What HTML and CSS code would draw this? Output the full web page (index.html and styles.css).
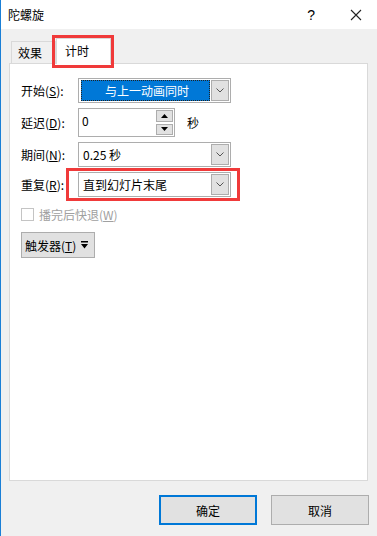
FILE: index.html
```html
<!DOCTYPE html>
<html lang="zh-CN">
<head>
    <meta charset="UTF-8">
    <title>陀螺旋</title>
    <link rel="stylesheet" href="styles.css">
</head>
<body>
    <div class="window">
        <div class="titlebar">
            <span class="title">陀螺旋</span>
            <span class="help">?</span>
            <svg class="close" width="12" height="12" viewBox="0 0 12 12">
                <path d="M1 1 L11 11 M11 1 L1 11" stroke="#222" stroke-width="1.1" fill="none"/>
            </svg>
        </div>

        <div class="tabs">
            <div class="tab">效果</div>
            <div class="tab active">计时<span class="mark"></span></div>
        </div>

        <div class="panel">
            <div class="row">
                <span class="label">开始(<u>S</u>):</span>
                <div class="combo">
                    <div class="combo-value selected">与上一动画同时</div>
                    <span class="drop"><svg width="8" height="5" viewBox="0 0 8 5"><path d="M0.5 0.5 L4 4 L7.5 0.5" stroke="#555" fill="none"/></svg></span>
                </div>
            </div>

            <div class="row">
                <span class="label">延迟(<u>D</u>):</span>
                <div class="spin">
                    <span class="spin-value">0</span>
                    <div class="spin-btns">
                        <span class="spin-btn"><svg width="7" height="4" viewBox="0 0 7 4"><path d="M0 4 L3.5 0 L7 4 Z" fill="#000"/></svg></span>
                        <span class="spin-btn"><svg width="7" height="4" viewBox="0 0 7 4"><path d="M0 0 L3.5 4 L7 0 Z" fill="#000"/></svg></span>
                    </div>
                </div>
                <span class="unit">秒</span>
            </div>

            <div class="row">
                <span class="label">期间(<u>N</u>):</span>
                <div class="combo">
                    <div class="combo-value">0.25 秒</div>
                    <span class="drop"><svg width="8" height="5" viewBox="0 0 8 5"><path d="M0.5 0.5 L4 4 L7.5 0.5" stroke="#555" fill="none"/></svg></span>
                </div>
            </div>

            <div class="row">
                <span class="label">重复(<u>R</u>):</span>
                <div class="combo marked">
                    <div class="combo-value">直到幻灯片末尾</div>
                    <span class="drop"><svg width="8" height="5" viewBox="0 0 8 5"><path d="M0.5 0.5 L4 4 L7.5 0.5" stroke="#555" fill="none"/></svg></span>
                    <span class="mark"></span>
                </div>
            </div>

            <div class="check-row">
                <span class="checkbox"></span>
                <span class="check-label">播完后快退(<u>W</u>)</span>
            </div>

            <button class="trigger">
                <span class="trigger-text">触发器(<u>T</u>)</span>
                <svg width="7" height="8" viewBox="0 0 7 8"><path d="M0 0 H7 V1.4 H0 Z M0 3 H7 L3.5 7.5 Z" fill="#000"/></svg>
            </button>
        </div>

        <div class="footer">
            <button class="btn default">确定</button>
            <button class="btn">取消</button>
        </div>
    </div>
</body>
</html>
```

FILE: styles.css
```css
body {
    margin: 0;
    background: #f0f0f0;
    font-family: "Noto Sans CJK SC", "Noto Sans", sans-serif;
    font-size: 12px;
    color: #000;
}
.window {
    width: 377px;
    height: 536px;
    box-sizing: border-box;
    border-left: 1px solid #1a7fd6;
    display: flex;
    flex-direction: column;
    overflow: hidden;
}
.titlebar {
    height: 29px;
    flex: none;
    background: #fff;
    display: flex;
    align-items: center;
    padding-left: 7px;
}
.title {
    flex: 1;
    font-size: 12px;
    line-height: 29px;
}
.help {
    font-family: "Liberation Sans", sans-serif;
    font-size: 14px;
    margin-right: 35px;
}
.close {
    margin-right: 15px;
}
.tabs {
    height: 34px;
    flex: none;
    display: flex;
    align-items: flex-end;
    padding-left: 10px;
}
.tab {
    height: 22px;
    box-sizing: border-box;
    width: 45px;
    border: 1px solid #d9d9d9;
    border-bottom: none;
    background: #f0f0f0;
    padding-left: 6px;
    line-height: 22px;
}
.tab.active {
    position: relative;
    z-index: 1;
    width: 55px;
    height: 26px;
    margin-bottom: -1px;
    background: #fff;
    padding-left: 8px;
    line-height: 24px;
}
.mark {
    position: absolute;
    border: 3px solid #f03a3a;
    pointer-events: none;
}
.tab .mark {
    left: -5px;
    top: -4px;
    right: -4px;
    bottom: -4px;
}
.panel {
    flex: 1;
    margin: 0 9px 0 8px;
    background: #fff;
    border: 1px solid #d9d9d9;
    padding: 14px 11px 0 11px;
}
.row {
    display: flex;
    align-items: center;
    margin-bottom: 5px;
}
.label {
    width: 57px;
    flex: none;
}
.combo {
    position: relative;
    width: 153px;
    height: 25px;
    box-sizing: border-box;
    border: 1px solid #adadad;
    padding: 1px;
    display: flex;
    gap: 1px;
}
.combo-value {
    flex: 1;
    padding-left: 3px;
    line-height: 21px;
}
.combo-value.selected {
    background: #0078d7;
    color: #fff;
    text-align: center;
    outline: 1px dotted #222;
    outline-offset: -1px;
    margin-left: 1px;
}
.drop {
    width: 18px;
    box-sizing: border-box;
    border: 1px solid #adadad;
    background: #e1e1e1;
    display: flex;
    align-items: center;
    justify-content: center;
}
.combo.marked .mark {
    left: -13px;
    top: -5px;
    right: -10px;
    bottom: -5px;
}
.spin {
    width: 97px;
    height: 29px;
    box-sizing: border-box;
    border: 1px solid #adadad;
    display: flex;
    padding: 1px 1px 1px 3px;
}
.spin-value {
    flex: 1;
    line-height: 18px;
    padding-top: 2px;
}
.spin-btns {
    width: 17px;
    display: flex;
    flex-direction: column;
    gap: 2px;
}
.spin-btn {
    flex: 1;
    border: 1px solid #adadad;
    background: #e1e1e1;
    display: flex;
    align-items: center;
    justify-content: center;
}
.unit {
    margin-left: 12px;
}
.check-row {
    display: flex;
    align-items: center;
    margin-top: 11px;
    height: 13px;
}
.checkbox {
    width: 13px;
    height: 13px;
    box-sizing: border-box;
    border: 1px solid #c4c4c4;
    margin-right: 5px;
}
.check-label {
    color: #a0a0a0;
}
.trigger {
    margin-top: 11px;
    width: 74px;
    height: 26px;
    border: 1px solid #adadad;
    background: #e1e1e1;
    font: inherit;
    color: #000;
    padding: 0 0 0 3px;
    display: flex;
    align-items: center;
    gap: 5px;
}
.trigger-text {
    white-space: nowrap;
}
.footer {
    flex: none;
    height: 55px;
    box-sizing: border-box;
    padding: 14px 8px 0 0;
    display: flex;
    justify-content: flex-end;
    align-items: flex-start;
    gap: 14px;
}
.btn {
    width: 98px;
    height: 30px;
    border: 1px solid #adadad;
    background: #e1e1e1;
    font: inherit;
    color: #000;
}
.btn.default {
    border: 2px solid #0078d7;
}
```
